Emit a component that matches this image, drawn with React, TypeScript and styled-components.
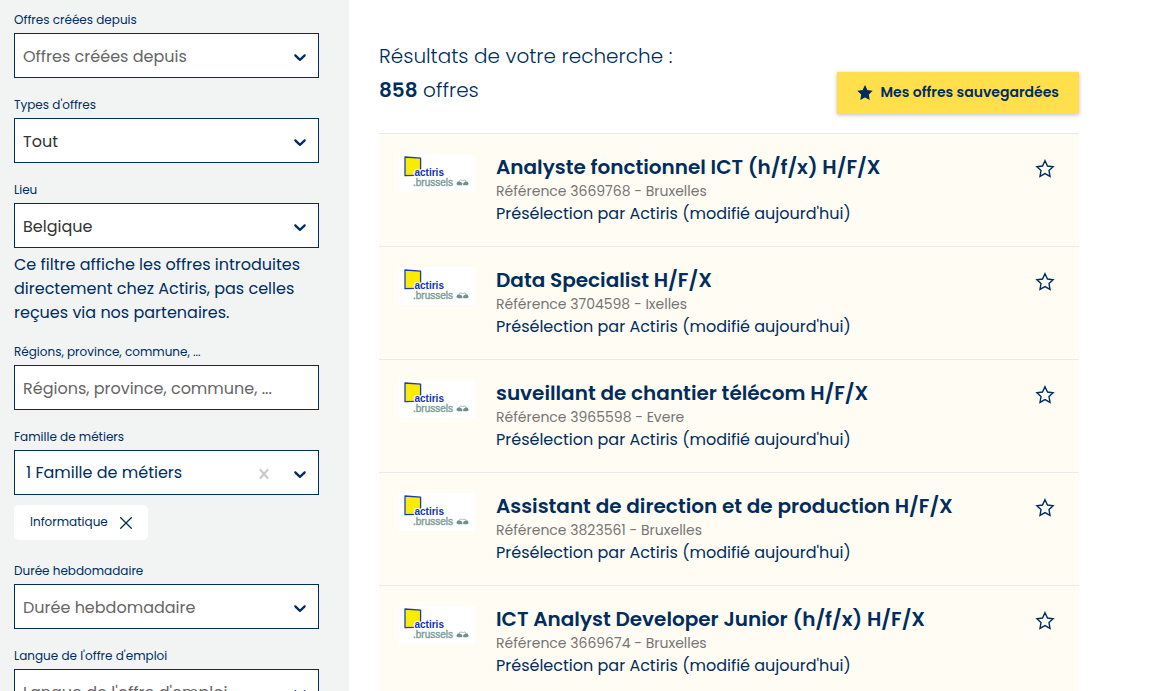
import React from 'react';
import styled, { createGlobalStyle } from 'styled-components';

const navy = '#002d5d';

const GlobalStyle = createGlobalStyle`
  *, *::before, *::after { box-sizing: border-box; }
  body {
    margin: 0;
    background: #fff;
    color: ${navy};
    font-family: Poppins, Inter, "Open Sans", sans-serif;
    font-size: 16px;
    line-height: 24px;
  }
  button, input, select { font: inherit; }
`;

const Page = styled.div`
  display: flex;
  min-height: 100vh;
`;

const Sidebar = styled.aside`
  flex: 0 0 349px;
  min-width: 0;
  display: flex;
  flex-direction: column;
  gap: 18px;
  padding: 11px 30px 18px 14px;
  background: #f2f4f4;
`;

const Field = styled.div`
  display: flex;
  flex-direction: column;
`;

const Label = styled.label`
  margin-bottom: 4px;
  font-size: 12px;
  line-height: 18px;
`;

const Control = styled.div`
  position: relative;
  display: flex;
`;

const Select = styled.select<{ $tone: string; $multi?: boolean }>`
  appearance: none;
  flex: 1;
  min-width: 0;
  height: 45px;
  padding: ${(p) => (p.$multi ? '0 40px 0 11px' : '2px 40px 0 8px')};
  border: 1px solid ${navy};
  border-radius: 0;
  background: #fff;
  color: ${(p) => p.$tone};
`;

const TextInput = styled.input`
  flex: 1;
  min-width: 0;
  height: 45px;
  padding: 2px 8px 0;
  border: 1px solid ${navy};
  border-radius: 0;
  background: #fff;
  color: ${navy};
  &::placeholder { color: #666; opacity: 1; }
`;

const Chevron = styled.svg`
  position: absolute;
  right: 9px;
  top: 14px;
  width: 20px;
  height: 20px;
  fill: ${navy};
  pointer-events: none;
`;

const ClearButton = styled.button`
  position: absolute;
  right: 45px;
  top: 14px;
  display: flex;
  padding: 0;
  border: 0;
  background: none;
  color: #ccc;
`;

const Help = styled.p`
  margin: 5px 0 0;
`;

const Chips = styled.div`
  display: flex;
  margin: 10px 0 4px;
`;

const Chip = styled.button`
  display: flex;
  align-items: center;
  gap: 12px;
  height: 35px;
  padding: 0 16px;
  border: 0;
  border-radius: 5px;
  background: #fff;
  color: ${navy};
  font-size: 12px;
`;

const ButtonText = styled.span`
  padding-bottom: 2px;
`;

const Main = styled.main`
  flex: 1;
  max-width: 760px;
  padding: 39px 30px 0;
`;

const Header = styled.header`
  display: flex;
  justify-content: space-between;
  align-items: flex-end;
  padding-bottom: 19px;
`;

const Heading = styled.h1`
  margin: 0;
  padding-bottom: 7px;
  font-size: 20px;
  font-weight: 300;
  line-height: 34px;
  strong { font-weight: 600; }
`;

const SavedButton = styled.button`
  display: flex;
  align-items: center;
  justify-content: center;
  gap: 8px;
  min-width: 242px;
  height: 42px;
  padding: 0 20px;
  border: 0;
  background: #ffe04c;
  box-shadow: 0 1px 4px rgba(0, 0, 0, 0.25);
  color: ${navy};
  font-size: 14px;
  font-weight: 600;
`;

const Offers = styled.ul`
  margin: 0;
  padding: 0;
  list-style: none;
`;

const Offer = styled.li`
  display: flex;
  align-items: flex-start;
  gap: 21px;
  padding: 20px 24px 20px 20px;
  border-top: 1px solid #e6ebee;
  background: #fffcf3;
`;

const OfferBody = styled.div`
  flex: 1;
`;

const Title = styled.h2`
  margin: 0;
  font-size: 20px;
  font-weight: 600;
  line-height: 26px;
  a { color: inherit; text-decoration: none; }
`;

const Reference = styled.p`
  margin: 0;
  color: #757575;
  font-size: 14px;
  line-height: 22px;
`;

const Note = styled.p`
  margin: 0;
`;

const SaveButton = styled.button`
  display: flex;
  margin-top: 5px;
  padding: 0;
  border: 0;
  background: none;
  color: ${navy};
`;

const Star = ({ size, filled }: { size: number; filled?: boolean }) => (
  <svg width={size} height={size} viewBox="0 0 20 20" fill={filled ? 'currentColor' : 'none'} stroke="currentColor" strokeWidth="1.4" strokeLinejoin="miter" aria-hidden="true">
    <path d="M10 1.7 L12.5 7 L18.1 7.7 L14 11.6 L15 17.4 L10 14.6 L5 17.4 L6 11.6 L1.9 7.7 L7.5 7 Z" />
  </svg>
);

const Arrow = () => (
  <Chevron viewBox="0 0 20 20" aria-hidden="true">
    <path d="M4.516 7.548c0.436-0.446 1.043-0.481 1.576 0l3.908 3.747 3.908-3.747c0.533-0.481 1.141-0.446 1.574 0 0.436 0.445 0.408 1.197 0 1.615-0.406 0.418-4.695 4.502-4.695 4.502-0.217 0.223-0.502 0.335-0.787 0.335s-0.57-0.112-0.789-0.335c0 0-4.287-4.084-4.695-4.502s-0.436-1.17 0-1.615z" />
  </Chevron>
);

const LogoText = styled.text`
  font-family: "Liberation Sans", sans-serif;
  font-size: 10px;
`;

const Logo = () => (
  <svg width="76" height="38" viewBox="0 0 76 38" role="img" aria-label="actiris.brussels">
    <rect width="76" height="38" fill="#fff" />
    <path d="M6.4 3.4 L21.6 4.2 V19.6 L6.4 21.6 Z" fill="#f9ec00" />
    <path d="M15.8 21.4 L6 21.7 V3 L21.6 4.1 V15.4" fill="none" stroke="#1f3da8" strokeWidth="1.3" strokeLinejoin="round" />
    <LogoText x="15.5" y="22.3" fontWeight="700" fill="#0d35ad" stroke="#fff" strokeWidth="2" paintOrder="stroke">actiris</LogoText>
    <LogoText x="14" y="32" fill="#7d9c98" stroke="#7d9c98" strokeWidth="0.4">.brussels</LogoText>
    <g fill="#6f918c">
      <path d="M57.4 29.5 Q58 27 61 27.4 L63.3 29 V31.3 H59.5 Q57.6 31.4 57.4 29.5 Z" />
      <path d="M69.6 29.5 Q69 27 66.4 27.4 L64.2 29 V31.3 H68 Q69.6 31.4 69.6 29.5 Z" />
    </g>
    <path d="M60 27.2 Q61 25.2 63.6 26.5 Q66.4 25.2 67.4 27.2" fill="none" stroke="#a9bfbb" strokeWidth="1" />
  </svg>
);

interface DropdownProps {
  id: string;
  label: string;
  value: string;
  tone?: string;
  multi?: boolean;
  children?: React.ReactNode;
}

const Dropdown = ({ id, label, value, tone = '#666', multi, children }: DropdownProps) => (
  <Field>
    <Label htmlFor={id}>{label}</Label>
    <Control>
      <Select id={id} $tone={tone} $multi={multi}>
        <option>{value}</option>
      </Select>
      {multi && (
        <ClearButton type="button" aria-label="Effacer">
          <svg width="20" height="20" viewBox="0 0 20 20" fill="currentColor" aria-hidden="true">
            <path d="M14.348 14.849c-0.469 0.469-1.229 0.469-1.697 0l-2.651-3.030-2.651 3.029c-0.469 0.469-1.229 0.469-1.697 0-0.469-0.469-0.469-1.229 0-1.697l2.758-3.15-2.759-3.152c-0.469-0.469-0.469-1.228 0-1.697s1.228-0.469 1.697 0l2.652 3.031 2.651-3.031c0.469-0.469 1.228-0.469 1.697 0s0.469 1.229 0 1.697l-2.758 3.152 2.758 3.15c0.469 0.469 0.469 1.229 0 1.698z" />
          </svg>
        </ClearButton>
      )}
      <Arrow />
    </Control>
    {children}
  </Field>
);

const offers = [
  { title: 'Analyste fonctionnel ICT (h/f/x) H/F/X', reference: '3669768', place: 'Bruxelles' },
  { title: 'Data Specialist H/F/X', reference: '3704598', place: 'Ixelles' },
  { title: 'suveillant de chantier télécom H/F/X', reference: '3965598', place: 'Evere' },
  { title: 'Assistant de direction et de production H/F/X', reference: '3823561', place: 'Bruxelles' },
  { title: 'ICT Analyst Developer Junior (h/f/x) H/F/X', reference: '3669674', place: 'Bruxelles' },
];

export default function App() {
  return (
    <>
      <GlobalStyle />
      <Page>
        <Sidebar>
          <Dropdown id="since" label="Offres créées depuis" value="Offres créées depuis" />
          <Dropdown id="types" label="Types d'offres" value="Tout" tone="#333" />
          <Dropdown id="place" label="Lieu" value="Belgique" tone="#333">
            <Help>Ce filtre affiche les offres introduites directement chez Actiris, pas celles reçues via nos partenaires.</Help>
          </Dropdown>
          <Field>
            <Label htmlFor="region">Régions, province, commune, ...</Label>
            <Control>
              <TextInput id="region" type="text" placeholder="Régions, province, commune, ..." />
            </Control>
          </Field>
          <Dropdown id="family" label="Famille de métiers" value="1 Famille de métiers" tone={navy} multi>
            <Chips>
              <Chip type="button">
                <ButtonText>Informatique</ButtonText>
                <svg width="12" height="12" viewBox="0 0 12 12" stroke="currentColor" strokeWidth="1.3" aria-hidden="true">
                  <path d="M0.3 0.3 L11.7 11.7 M11.7 0.3 L0.3 11.7" />
                </svg>
              </Chip>
            </Chips>
          </Dropdown>
          <Dropdown id="hours" label="Durée hebdomadaire" value="Durée hebdomadaire" />
          <Dropdown id="language" label="Langue de l'offre d'emploi" value="Langue de l'offre d'emploi" />
        </Sidebar>
        <Main>
          <Header>
            <Heading>
              Résultats de votre recherche :<br />
              <strong>858</strong> offres
            </Heading>
            <SavedButton type="button">
              <Star size={16} filled />
              <ButtonText>Mes offres sauvegardées</ButtonText>
            </SavedButton>
          </Header>
          <Offers>
            {offers.map((offer) => (
              <Offer key={offer.reference}>
                <Logo />
                <OfferBody>
                  <Title><a href="#offre">{offer.title}</a></Title>
                  <Reference>Référence {offer.reference} - {offer.place}</Reference>
                  <Note>Présélection par Actiris (modifié aujourd'hui)</Note>
                </OfferBody>
                <SaveButton type="button" aria-label="Sauvegarder l'offre">
                  <Star size={20} />
                </SaveButton>
              </Offer>
            ))}
          </Offers>
        </Main>
      </Page>
    </>
  );
}
